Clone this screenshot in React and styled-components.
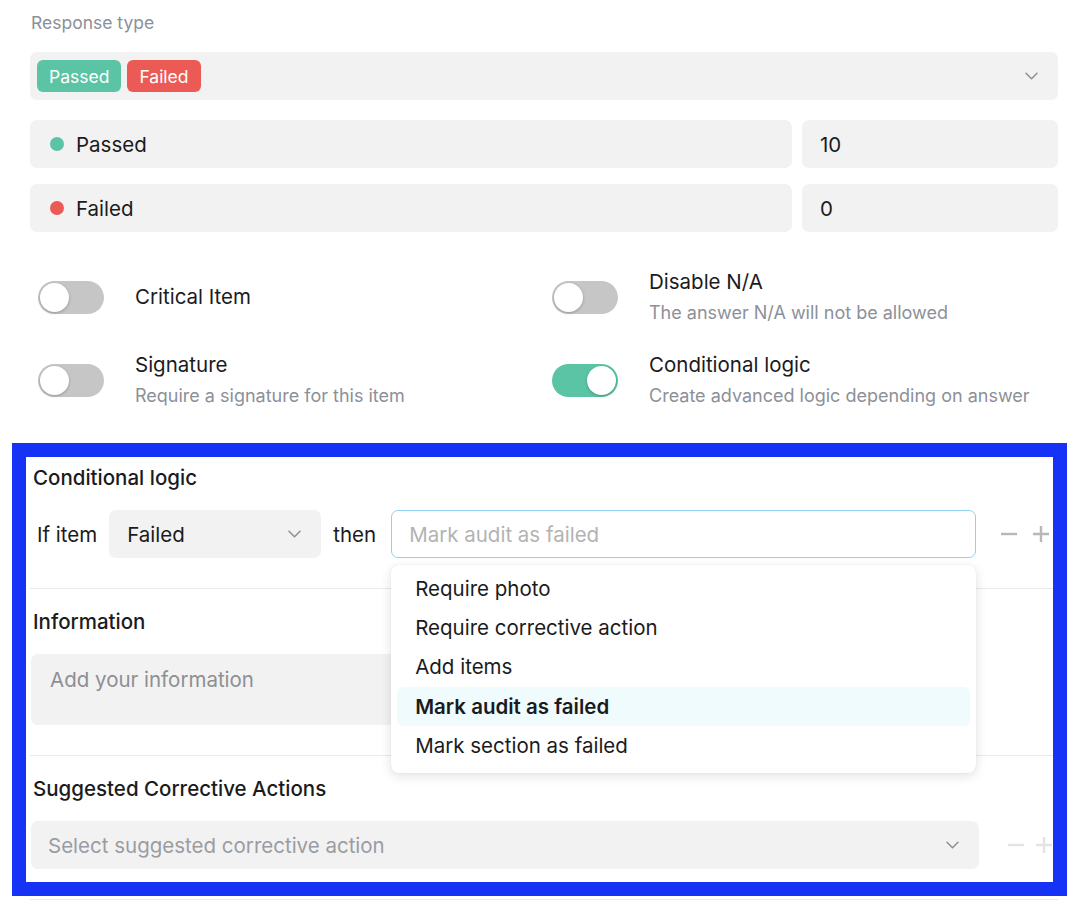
import React from "react";
import styled, { createGlobalStyle } from "styled-components";

const GlobalStyle = createGlobalStyle`
  body {
    margin: 0;
    background: #ffffff;
    font-family: Inter, "Noto Sans", "Liberation Sans", sans-serif;
    color: #1b1b1d;
  }
`;

const colors = {
  teal: "#5bc4a5",
  red: "#ec5a55",
  field: "#f2f2f2",
  muted: "#8c9099",
  line: "#e9e9ea",
  frame: "#1632f5",
};

const Page = styled.div`
  width: 1028px;
  padding: 12px 0 0 30px;
`;

const FieldLabel = styled.div`
  font-size: 17.5px;
  line-height: 22px;
  color: ${colors.muted};
  padding-left: 1px;
  margin-bottom: 18px;
`;

const SelectBox = styled.div`
  display: flex;
  align-items: center;
  height: 48px;
  border-radius: 7px;
  background: ${colors.field};
  padding: 0 20px 0 7px;
  box-sizing: border-box;
  gap: 6px;
`;

const Tag = styled.span`
  display: inline-flex;
  align-items: center;
  height: 32px;
  padding: 0 12px;
  border-radius: 6px;
  font-size: 17.5px;
  color: #ffffff;
  background: ${(p) => p.$color};
`;

const Spacer = styled.div`
  flex: 1;
`;

const ScoreGrid = styled.div`
  display: grid;
  grid-template-columns: 1fr 256px;
  column-gap: 10px;
  row-gap: 16px;
  margin-top: 20px;
`;

const ScoreCell = styled.div`
  display: flex;
  align-items: center;
  gap: 12px;
  height: 48px;
  border-radius: 7px;
  background: ${colors.field};
  padding-left: ${(p) => (p.$value ? "18px" : "20px")};
  font-size: 20.5px;
`;

const Dot = styled.span`
  width: 14px;
  height: 14px;
  border-radius: 50%;
  background: ${(p) => p.$color};
`;

const ToggleGrid = styled.div`
  display: grid;
  grid-template-columns: 1fr 1fr;
  row-gap: 27px;
  margin-top: 37px;
`;

const ToggleRow = styled.div`
  display: flex;
  align-items: center;
  min-height: 56px;
  padding-left: 8px;
`;

const Switch = styled.span`
  position: relative;
  flex: none;
  width: 66px;
  height: 33px;
  border-radius: 17px;
  background: ${(p) => (p.$on ? colors.teal : "#c6c6c6")};
  margin-right: 31px;

  &::after {
    content: "";
    position: absolute;
    top: 2px;
    left: ${(p) => (p.$on ? "35px" : "2px")};
    width: 29px;
    height: 29px;
    border-radius: 50%;
    background: #ffffff;
    box-shadow: 0 1px 3px rgba(0, 0, 0, 0.25);
  }
`;

const ToggleText = styled.div`
  display: flex;
  flex-direction: column;
  gap: 8px;
`;

const ToggleTitle = styled.div`
  font-size: 20.5px;
  line-height: 24px;
`;

const ToggleDesc = styled.div`
  font-size: 18px;
  line-height: 22px;
  color: ${colors.muted};
`;

const Sections = styled.div`
  position: relative;
  margin-top: 38px;

  &::after {
    content: "";
    position: absolute;
    top: -3px;
    left: -18px;
    right: -9px;
    bottom: 4px;
    border: 14px solid ${colors.frame};
    pointer-events: none;
  }
`;

const Section = styled.section`
  position: relative;
  padding: ${(p) => (p.$first ? "20px" : "21px")} 0 30px;
  border-bottom: 1px solid ${colors.line};
`;

const Heading = styled.h3`
  margin: 0 0 20px 3px;
  font-size: 20.5px;
  line-height: 24px;
  font-weight: 500;
`;

const LogicRow = styled.div`
  display: flex;
  align-items: center;
  gap: 12px;
  padding-left: 7px;
  font-size: 20.5px;
`;

const SmallSelect = styled.div`
  display: flex;
  align-items: center;
  justify-content: space-between;
  flex: none;
  width: 212px;
  height: 48px;
  box-sizing: border-box;
  padding: 0 20px 0 18px;
  border-radius: 7px;
  background: ${colors.field};
`;

const InputWrap = styled.div`
  position: relative;
  flex: none;
  width: 585px;
  margin-left: 3px;
`;

const ActionInput = styled.input`
  display: block;
  width: 100%;
  height: 48px;
  box-sizing: border-box;
  padding: 0 17px;
  border: 1px solid #90d2ee;
  border-radius: 7px;
  background: #ffffff;
  font: inherit;
  font-size: 20.5px;
  outline: none;

  &::placeholder {
    color: #b3b3b3;
  }
`;

const IconPair = styled.div`
  display: flex;
  flex: none;
  align-items: center;
  gap: ${(p) => (p.$faint ? "10px" : "14px")};
  margin-left: ${(p) => (p.$faint ? "28px" : "12px")};
  color: ${(p) => (p.$faint ? "#e3e3e3" : "#b8b8b8")};
`;

const Menu = styled.ul`
  position: absolute;
  top: 55px;
  left: 0;
  right: 0;
  margin: 0;
  padding: 4px 6px 8px;
  list-style: none;
  background: #ffffff;
  border-radius: 8px;
  box-shadow: 0 3px 12px rgba(0, 0, 0, 0.12), 0 0 1px rgba(0, 0, 0, 0.12);
  z-index: 2;
`;

const MenuItem = styled.li`
  display: flex;
  align-items: center;
  height: 39.2px;
  padding-left: 18px;
  border-radius: 6px;
  font-size: 20.5px;
  font-weight: ${(p) => (p.$active ? 600 : 400)};
  background: ${(p) => (p.$active ? "#effbfc" : "transparent")};
`;

const InfoArea = styled.textarea`
  display: block;
  width: 944px;
  height: 71px;
  box-sizing: border-box;
  margin-left: 1px;
  padding: 14px 19px;
  border: none;
  border-radius: 7px;
  background: ${colors.field};
  font: inherit;
  font-size: 20.5px;
  line-height: 24px;
  resize: none;
  outline: none;

  &::placeholder {
    color: #8e8f93;
  }
`;

const FieldRow = styled.div`
  display: flex;
  align-items: center;
`;

const WideSelect = styled.div`
  display: flex;
  align-items: center;
  justify-content: space-between;
  flex: none;
  width: 948px;
  height: 48px;
  box-sizing: border-box;
  margin-left: 1px;
  padding: 0 20px 0 17px;
  border-radius: 7px;
  background: ${colors.field};
  font-size: 20.5px;
  color: #9a9ca2;
`;

const Chevron = ({ color = "#8e8f96" }) => (
  <svg width="13" height="8" viewBox="0 0 13 8" fill="none">
    <path d="M1 1.2l5.5 5.5L12 1.2" stroke={color} strokeWidth="1.5" strokeLinecap="round" strokeLinejoin="round" />
  </svg>
);

const Minus = () => (
  <svg width="18" height="18" viewBox="0 0 18 18">
    <path d="M1 9h16" stroke="currentColor" strokeWidth="2.4" />
  </svg>
);

const Plus = () => (
  <svg width="18" height="18" viewBox="0 0 18 18">
    <path d="M1 9h16M9 1v16" stroke="currentColor" strokeWidth="2.4" />
  </svg>
);

const toggles = [
  { title: "Critical Item" },
  { title: "Disable N/A", desc: "The answer N/A will not be allowed" },
  { title: "Signature", desc: "Require a signature for this item" },
  { title: "Conditional logic", desc: "Create advanced logic depending on answer", on: true },
];

const actions = [
  "Require photo",
  "Require corrective action",
  "Add items",
  "Mark audit as failed",
  "Mark section as failed",
];

export default function App() {
  return (
    <Page>
      <GlobalStyle />
      <FieldLabel>Response type</FieldLabel>
      <SelectBox>
        <Tag $color={colors.teal}>Passed</Tag>
        <Tag $color={colors.red}>Failed</Tag>
        <Spacer />
        <Chevron />
      </SelectBox>

      <ScoreGrid>
        <ScoreCell>
          <Dot $color={colors.teal} />
          Passed
        </ScoreCell>
        <ScoreCell $value>10</ScoreCell>
        <ScoreCell>
          <Dot $color={colors.red} />
          Failed
        </ScoreCell>
        <ScoreCell $value>0</ScoreCell>
      </ScoreGrid>

      <ToggleGrid>
        {toggles.map((t) => (
          <ToggleRow key={t.title}>
            <Switch $on={t.on} />
            <ToggleText>
              <ToggleTitle>{t.title}</ToggleTitle>
              {t.desc && <ToggleDesc>{t.desc}</ToggleDesc>}
            </ToggleText>
          </ToggleRow>
        ))}
      </ToggleGrid>

      <Sections>
        <Section $first>
          <Heading>Conditional logic</Heading>
          <LogicRow>
            <span>If item</span>
            <SmallSelect>
              Failed
              <Chevron />
            </SmallSelect>
            <span>then</span>
            <InputWrap>
              <ActionInput readOnly placeholder="Mark audit as failed" />
              <Menu>
                {actions.map((a) => (
                  <MenuItem key={a} $active={a === "Mark audit as failed"}>
                    {a}
                  </MenuItem>
                ))}
              </Menu>
            </InputWrap>
            <IconPair>
              <Minus />
              <Plus />
            </IconPair>
          </LogicRow>
        </Section>

        <Section>
          <Heading>Information</Heading>
          <InfoArea readOnly placeholder="Add your information" />
        </Section>

        <Section>
          <Heading>Suggested Corrective Actions</Heading>
          <FieldRow>
            <WideSelect>
              Select suggested corrective action
              <Chevron />
            </WideSelect>
            <IconPair $faint>
              <Minus />
              <Plus />
            </IconPair>
          </FieldRow>
        </Section>
      </Sections>
    </Page>
  );
}
